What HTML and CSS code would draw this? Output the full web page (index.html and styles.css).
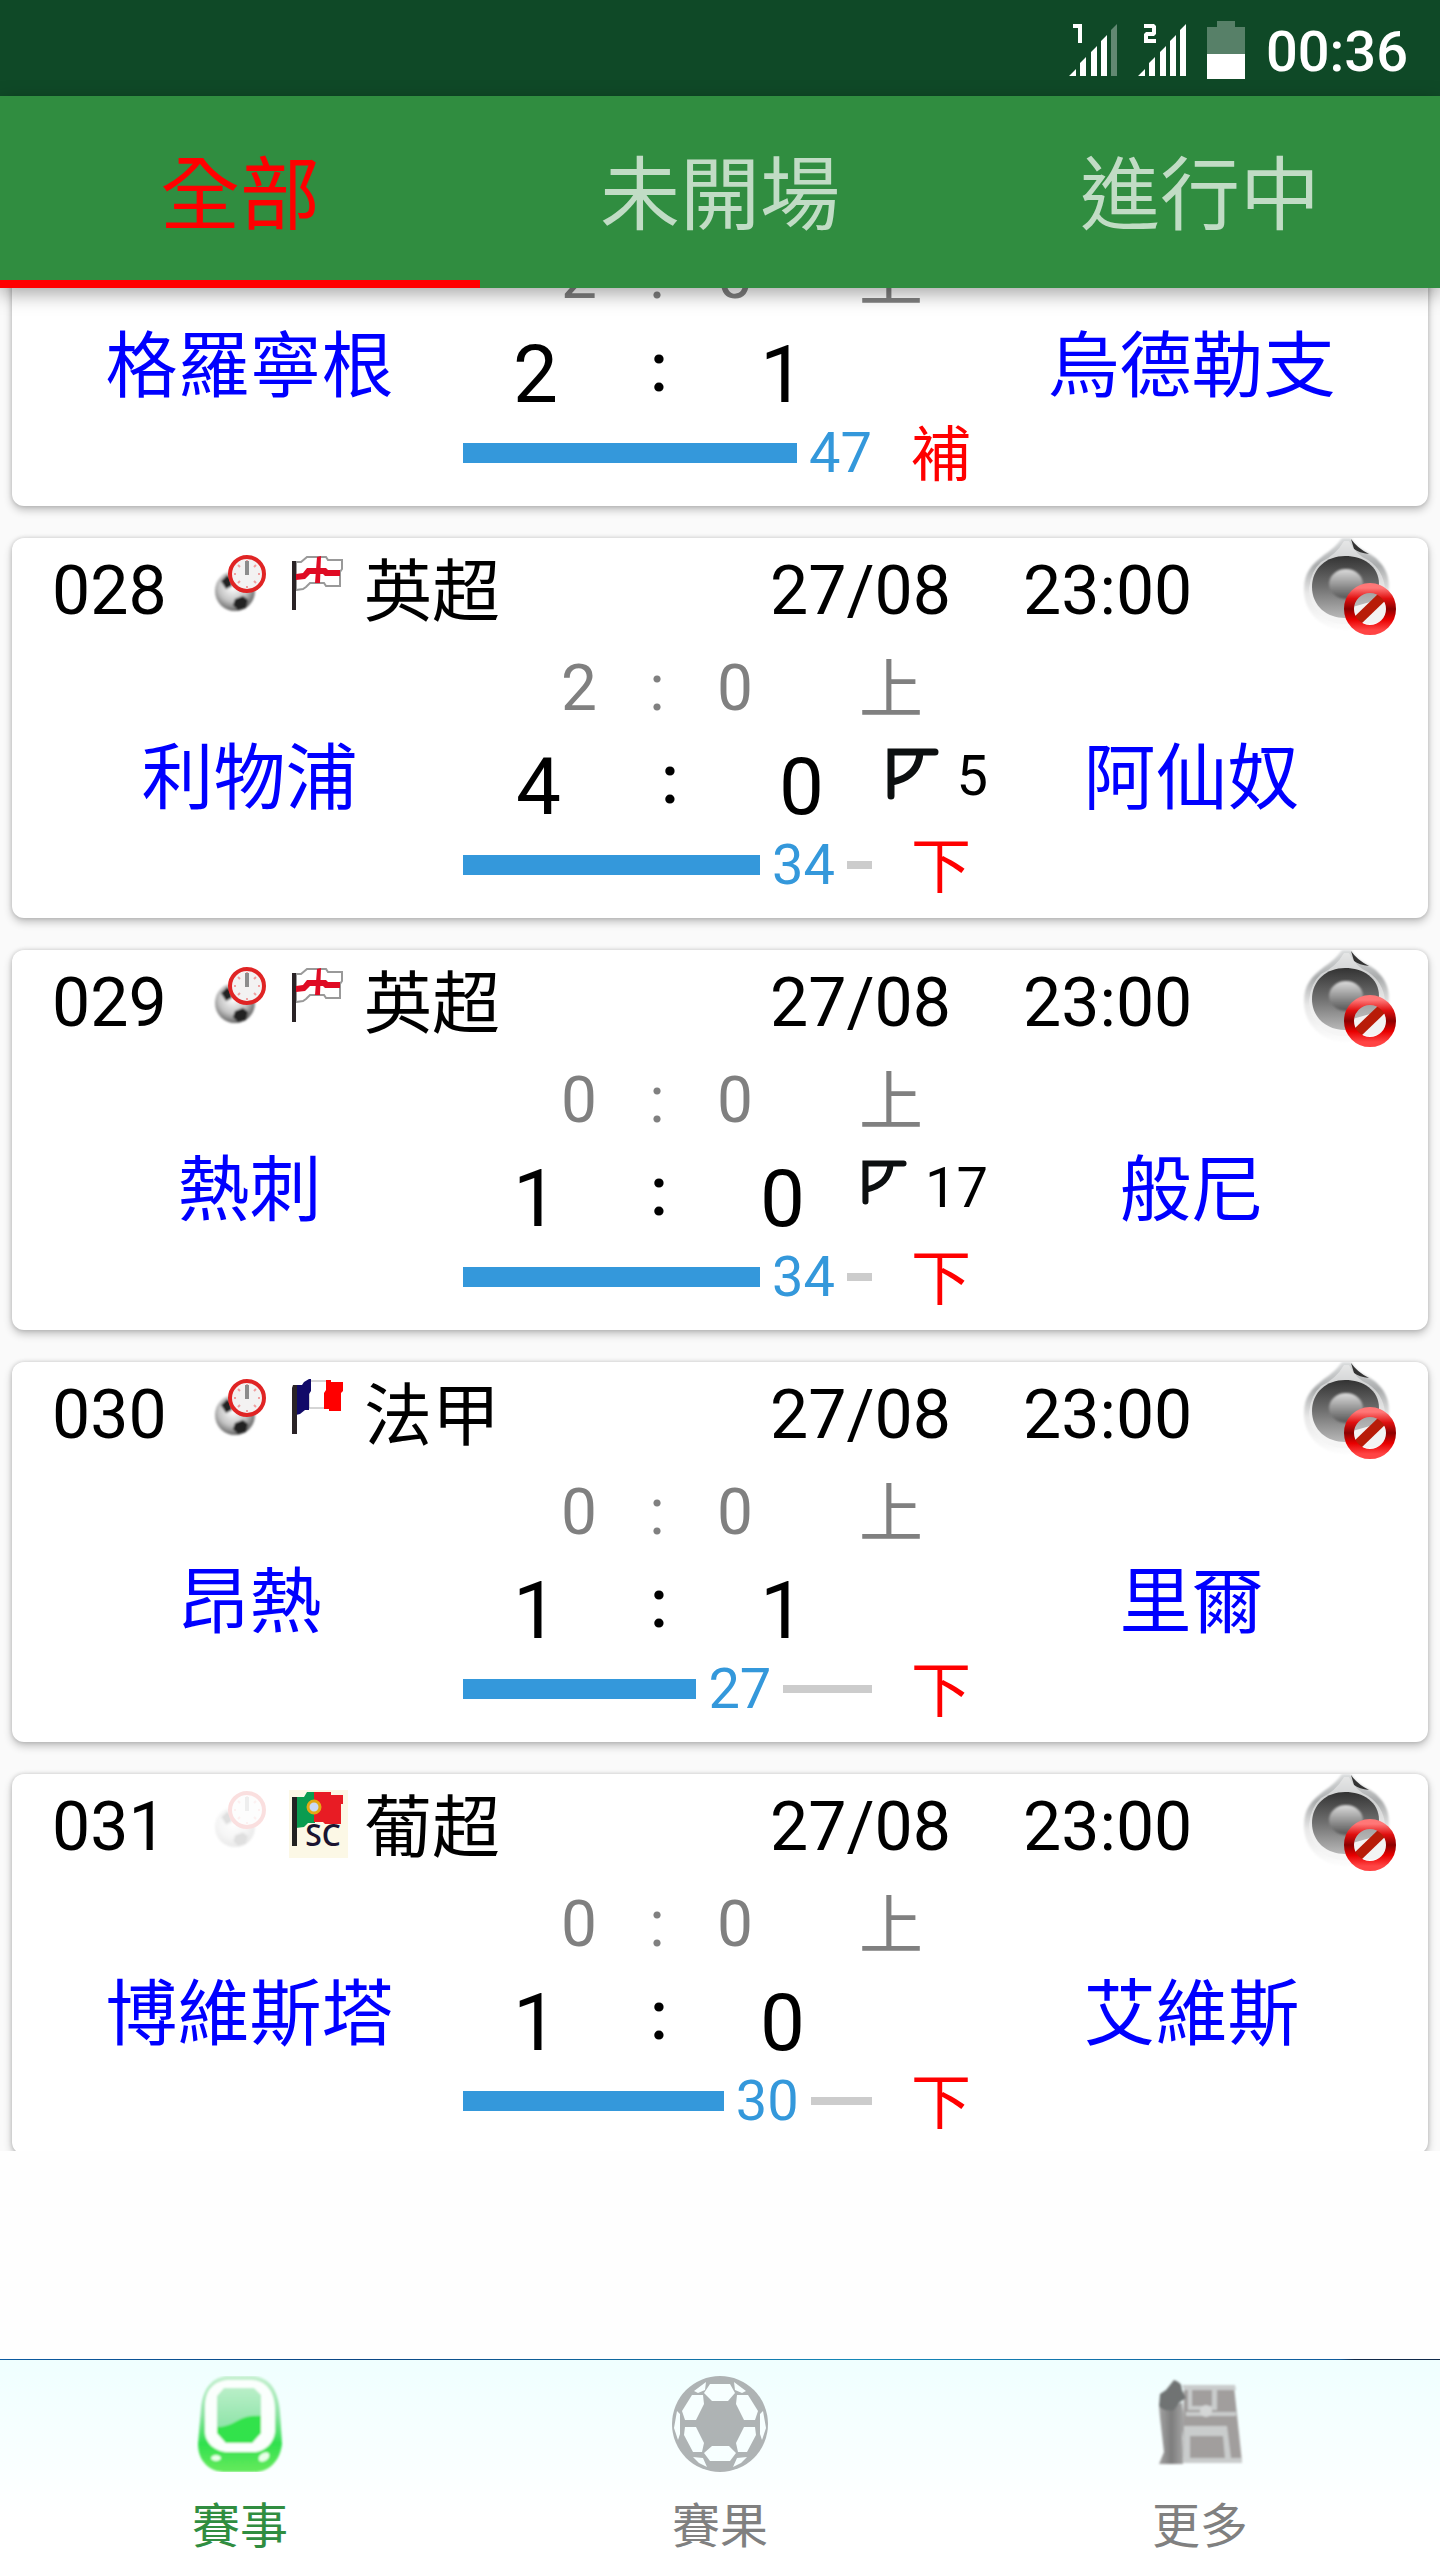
FILE: index.html
```html
<!DOCTYPE html>
<html lang="zh-Hant">
<head>
<meta charset="utf-8">
<meta name="viewport" content="width=device-width, initial-scale=1">
<title>賽事</title>
<link rel="stylesheet" href="styles.css">
</head>
<body>
<svg class="defs" aria-hidden="true">
  <defs>
    <linearGradient id="g-rim" x1="0" y1="0" x2="0" y2="1"><stop offset="0" stop-color="#dcdedf"/><stop offset=".3" stop-color="#a9abac"/><stop offset=".6" stop-color="#e8e8e8"/><stop offset="1" stop-color="#fdfdfd"/></linearGradient>
    <linearGradient id="g-cone" x1="0" y1="0" x2="0" y2="1"><stop offset="0" stop-color="#333"/><stop offset=".5" stop-color="#707070"/><stop offset="1" stop-color="#b8b8b8"/></linearGradient>
    <linearGradient id="g-dome" x1="0" y1="0" x2="0" y2="1"><stop offset="0" stop-color="#dcdcdc"/><stop offset="1" stop-color="#555"/></linearGradient>
    <linearGradient id="g-ban" x1="0" y1="0" x2="0" y2="1"><stop offset="0" stop-color="#f77"/><stop offset=".25" stop-color="#e01010"/><stop offset=".5" stop-color="#8c0000"/><stop offset=".75" stop-color="#e80000"/><stop offset="1" stop-color="#f44"/></linearGradient>
    <radialGradient id="g-ball" cx=".45" cy=".4" r=".6"><stop offset="0" stop-color="#fff"/><stop offset=".6" stop-color="#c4c4c4"/><stop offset="1" stop-color="#666"/></radialGradient>
    <linearGradient id="g-case" x1="0" y1="0" x2="0" y2="1"><stop offset="0" stop-color="#c4f0cf"/><stop offset=".4" stop-color="#8fe4a5"/><stop offset=".7" stop-color="#2fe04e"/><stop offset="1" stop-color="#66ea5c"/></linearGradient>
    <linearGradient id="g-screen" x1="0" y1="0" x2="0" y2="1"><stop offset="0" stop-color="#b9efc8"/><stop offset="1" stop-color="#7fdf9d"/></linearGradient>
    <linearGradient id="g-figure" x1="0" y1="0" x2="1" y2="0"><stop offset="0" stop-color="#a2a2a2"/><stop offset=".5" stop-color="#7d7d7d"/><stop offset="1" stop-color="#a6a6a6"/></linearGradient>
    <filter id="soft"><feGaussianBlur stdDeviation="1"/></filter>
  </defs>
  <symbol id="i-clock" viewBox="0 0 59 68">
    <g filter="url(#soft)">
      <circle cx="23" cy="37" r="20" fill="url(#g-ball)"/>
      <path d="M9 27l6-6 4 3 1 8-6 3zM23 45l8-3 5 4-2 8-8 2-5-5z" fill="#222"/>
    </g>
    <circle cx="35" cy="20" r="17" fill="#f3f2f2" stroke="#e02424" stroke-width="4"/>
    <path d="M35 6v2M35 32v2M22 20h2M46 20h2M26 11l2 2M44 11l-2 2M26 29l2-2M44 29l-2-2" stroke="#efa0a0" stroke-width="2"/>
    <path d="M35 7v14" stroke="#8c8c8c" stroke-width="4"/>
  </symbol>
  <symbol id="i-flag-en" viewBox="0 0 59 68">
    <path d="M7 8h5l6-5h19l2 3h14v9l-2 3v14h-14l-2-3h-14l-4 4-3 2-7 1z" fill="#fff" stroke="#999" stroke-width="2"/>
    <path d="M28 3l4-1-1 27h-5zM7 20l7-1 4-5h19l2 2h12v6h-15l-2-2h-13l-5 5-9 1z" fill="#df0b24"/>
    <path d="M3 7h4v49h-4z" fill="#2a2326"/>
  </symbol>
  <symbol id="i-flag-fr" viewBox="0 0 59 68">
    <path d="M20 3h18v27h-18z" fill="#fff" stroke="#aaa" stroke-width="1"/>
    <path d="M7 7h6l2-3 5-3h2v12l-2 3v16h-4l-5 4-4 1z" fill="#110a68"/>
    <path d="M37 2h5v2h12v9l-2 2v18h-12v-2h-5v-16l2-3z" fill="#f00"/>
    <path d="M4 7h4v49h-5v-46z" fill="#2a2326"/>
  </symbol>
  <symbol id="i-mute" viewBox="0 0 100 100">
    <path d="M43 0q-6 9-18 17C12 27 5 35 5 52c0 24 20 40 41 40s44-15 44-44C90 32 80 20 67 14Q57 9 52 0z" fill="url(#g-rim)" filter="url(#soft)"/>
    <path d="M52 1q6 9 18 15-10-1-15-5z" fill="#333"/>
    <path d="M45 3Q37 17 22 24 12 33 10 50c0 22 17 36 36 36s40-12 40-36Q84 32 69 22 57 17 50 3z" fill="#f3f3f3" opacity=".5"/>
    <path d="M13 49C13 30 28 18 46 18s34 10 34 28c0 22-16 34-34 34S13 68 13 49z" fill="url(#g-cone)"/>
    <ellipse cx="47" cy="46" rx="17" ry="15" fill="url(#g-dome)" filter="url(#soft)"/>
    <path d="M50 70a21 21 0 0 0 42-12z" fill="#eee"/>
    <circle cx="71" cy="71" r="19" fill="#fff" opacity=".3"/>
    <path d="M57 84l27-26" stroke="#b81c08" stroke-width="10"/>
    <circle cx="71" cy="71" r="21" fill="none" stroke="url(#g-ban)" stroke-width="10"/>
  </symbol>
  <symbol id="i-corner" viewBox="0 0 52 52">
    <path d="M4 48V4h44M33 5Q31 29 5 34" fill="none" stroke="#0c0f10" stroke-width="7" stroke-linecap="round"/>
  </symbol>
</svg>

<div class="app">
  <header class="status">
    <svg class="signal" viewBox="0 0 48 52" role="img" aria-label="SIM 1"><path fill="#fff" d="M4 0h9v19h-4V4H4zM0 52l7-7v7zM11 52V39l6-6v19zM22 52V28l6-6v30zM32 52V17l6-6v41z"/><path fill="#fff" opacity=".35" d="M42 52V6l6-6v52z"/></svg>
    <svg class="signal" viewBox="0 0 48 52" role="img" aria-label="SIM 2"><path fill="#fff" d="M6 0h10l2 2v8l-2 2h-6v3h8v4H6v-9l2-2h6V4H6zM0 52l7-7v7zM11 52V39l6-6v19zM22 52V28l6-6v30zM32 52V17l6-6v41zM42 52V6l6-6v52z"/></svg>
    <svg class="battery" viewBox="0 0 38 58" role="img" aria-label="電池"><path fill="#fff" opacity=".3" d="M0 6h10V0h18v6h10v27H0z"/><path fill="#fff" d="M0 33h38v25H0z"/></svg>
    <time class="now">00:36</time>
  </header>

  <nav class="tabs">
    <button class="tab tab-on" type="button">全部</button>
    <button class="tab" type="button">未開場</button>
    <button class="tab" type="button">進行中</button>
  </nav>

  <main class="list">
    <div class="feed">
      <article class="card">
        <div class="body">
          <span class="team">格羅寧根</span>
          <div class="mid">
            <div class="half"><span>2</span><span>:</span><span>0</span><span class="half-tag">上</span></div>
            <div class="score"><div class="goals"><span class="goal">2</span><span class="colon">:</span><span class="goal">1</span></div></div>
            <div class="clock"><div class="progress"><span class="done" style="--minute:47"></span><span class="minute">47</span></div><span class="period">補</span></div>
          </div>
          <span class="team team-away">烏德勒支</span>
        </div>
      </article>

      <article class="card">
        <div class="head">
          <span class="no">028</span>
          <svg class="icon"><use href="#i-clock"/></svg>
          <svg class="icon"><use href="#i-flag-en"/></svg>
          <span class="league">英超</span>
          <span>27/08</span>
          <span>23:00</span>
          <button class="mute" type="button" aria-label="靜音"><svg><use href="#i-mute"/></svg></button>
        </div>
        <div class="body">
          <span class="team">利物浦</span>
          <div class="mid">
            <div class="half"><span>2</span><span>:</span><span>0</span><span class="half-tag">上</span></div>
            <div class="score"><div class="goals goals-wide"><span class="goal">4</span><span class="colon">:</span><span class="goal">0</span></div><div class="corners"><svg class="corner-big"><use href="#i-corner"/></svg><span>5</span></div></div>
            <div class="clock"><div class="progress"><span class="done" style="--minute:34"></span><span class="minute">34</span><span class="rest"></span></div><span class="period">下</span></div>
          </div>
          <span class="team team-away">阿仙奴</span>
        </div>
      </article>

      <article class="card">
        <div class="head">
          <span class="no">029</span>
          <svg class="icon"><use href="#i-clock"/></svg>
          <svg class="icon"><use href="#i-flag-en"/></svg>
          <span class="league">英超</span>
          <span>27/08</span>
          <span>23:00</span>
          <button class="mute" type="button" aria-label="靜音"><svg><use href="#i-mute"/></svg></button>
        </div>
        <div class="body">
          <span class="team">熱刺</span>
          <div class="mid">
            <div class="half"><span>0</span><span>:</span><span>0</span><span class="half-tag">上</span></div>
            <div class="score"><div class="goals"><span class="goal">1</span><span class="colon">:</span><span class="goal">0</span></div><div class="corners"><svg class="corner"><use href="#i-corner"/></svg><span>17</span></div></div>
            <div class="clock"><div class="progress"><span class="done" style="--minute:34"></span><span class="minute">34</span><span class="rest"></span></div><span class="period">下</span></div>
          </div>
          <span class="team team-away">般尼</span>
        </div>
      </article>

      <article class="card">
        <div class="head">
          <span class="no">030</span>
          <svg class="icon"><use href="#i-clock"/></svg>
          <svg class="icon"><use href="#i-flag-fr"/></svg>
          <span class="league">法甲</span>
          <span>27/08</span>
          <span>23:00</span>
          <button class="mute" type="button" aria-label="靜音"><svg><use href="#i-mute"/></svg></button>
        </div>
        <div class="body">
          <span class="team">昂熱</span>
          <div class="mid">
            <div class="half"><span>0</span><span>:</span><span>0</span><span class="half-tag">上</span></div>
            <div class="score"><div class="goals"><span class="goal">1</span><span class="colon">:</span><span class="goal">1</span></div></div>
            <div class="clock"><div class="progress"><span class="done" style="--minute:27"></span><span class="minute">27</span><span class="rest"></span></div><span class="period">下</span></div>
          </div>
          <span class="team team-away">里爾</span>
        </div>
      </article>

      <article class="card">
        <div class="head">
          <span class="no">031</span>
          <svg class="icon icon-off"><use href="#i-clock"/></svg>
          <svg class="icon" viewBox="0 0 59 68">
            <path d="M0 0h59v68h-59z" fill="#fcf8e6"/>
            <path d="M7 7h8l3-5h8v31h-7l-4 4-8 1z" fill="#0a9c50"/>
            <path d="M25 2h17v3h12v9h-2v20h-16l-2-2h-9z" fill="#e81c24"/>
            <circle cx="25" cy="17" r="6" fill="#c9daf5" stroke="#e3a915" stroke-width="3"/>
            <path d="M3 7h5v49h-5z" fill="#222"/>
            <text x="34" y="56" text-anchor="middle" class="flag-code">SC</text>
          </svg>
          <span class="league">葡超</span>
          <span>27/08</span>
          <span>23:00</span>
          <button class="mute" type="button" aria-label="靜音"><svg><use href="#i-mute"/></svg></button>
        </div>
        <div class="body">
          <span class="team">博維斯塔</span>
          <div class="mid">
            <div class="half"><span>0</span><span>:</span><span>0</span><span class="half-tag">上</span></div>
            <div class="score"><div class="goals"><span class="goal">1</span><span class="colon">:</span><span class="goal">0</span></div></div>
            <div class="clock"><div class="progress"><span class="done" style="--minute:30"></span><span class="minute">30</span><span class="rest"></span></div><span class="period">下</span></div>
          </div>
          <span class="team team-away">艾維斯</span>
        </div>
      </article>
    </div>
  </main>

  <nav class="bottom">
    <a class="item item-on" href="#matches">
      <svg class="item-icon" viewBox="0 0 96 96">
        <g filter="url(#soft)">
          <path d="M34 0h28C78 2 86 14 88 36l2 32C88 86 76 96 62 96H34C18 96 6 86 6 68L9 32C11 12 20 2 34 0z" fill="url(#g-case)"/>
          <path d="M36 4h24C76 5 83 18 83 34v22C82 66 74 75 64 76H34C22 75 13 66 13 56V30C13 14 22 5 36 4z" fill="#fbfffd"/>
          <path d="M32 12h30l7 7v38l-9 10H34l-9-10V20z" fill="url(#g-screen)"/>
          <path d="M25 51q10 0 20-6t24-5v17l-9 10H34l-9-10z" fill="#33e24b"/>
          <ellipse cx="24" cy="82" rx="5" ry="3" fill="#e9ffe9"/><ellipse cx="72" cy="81" rx="6" ry="4" transform="rotate(-35 72 81)" fill="#e9ffe9"/>
        </g>
      </svg>
      <span>賽事</span>
    </a>
    <a class="item" href="#results">
      <svg class="item-icon" viewBox="0 0 96 96">
        <circle cx="48" cy="48" r="48" fill="#aeb3b4"/>
        <path fill="#f7ffff" d="M38 8h20l5 9-7 8H40l-8-8zM32 77l8-7h17l7 7-6 8H38zM20 19h11l1 9-8 16H13l-3-9zM76 19H65l-1 9 8 16h11l3-9zM13 51h11l8 16-2 9h-9l-9-17zM83 51H72l-8 16 2 9h9l9-17zM22 15l12-9-1 8-7 3zM74 15L62 6l1 8 7 3zM21 81l10 1 4 9-8-4zM75 81l-10 1-4 9 8-4zM5 35l3 3v20l-2 6-4-12zM91 35l-3 3v20l2 6 4-12z"/>
      </svg>
      <span>賽果</span>
    </a>
    <a class="item" href="#more">
      <svg class="item-icon" viewBox="0 0 96 96">
        <g filter="url(#soft)">
          <path d="M32 10h50l8 76H30z" fill="#a19e9d"/>
          <path d="M30 9h53l1 5H32zM34 36h50v4H34zM36 14h4v16h20V14h5v20H36zM32 50h43l4 32h-6l-2-22H38v23h-7z" fill="#c9cccc"/>
          <circle cx="54" cy="35" r="6" fill="#d4d6d6"/>
          <path d="M30 82h60v5H30z" fill="#c9cccc"/>
          <path d="M7 30l13 2 10-6 2 20-2 16 1 26H7l5-12-4-34z" fill="url(#g-figure)"/>
          <path d="M22 4q8 2 8 10l4 8-6 4-6 8q-10 2-15-4l1-12 6-4z" fill="#6f7373"/>
        </g>
      </svg>
      <span>更多</span>
    </a>
  </nav>
</div>
</body>
</html>
```
FILE: styles.css
```css
* { box-sizing: border-box; }

body {
  margin: 0;
  background: #fefefe;
  color: #000;
  font-family: Roboto, "Noto Sans CJK TC", sans-serif;
}

button {
  margin: 0;
  padding: 0;
  border: 0;
  background: none;
  font: inherit;
  color: inherit;
}

.defs {
  position: absolute;
  width: 0;
  height: 0;
}

.flag-code { font: 600 30px "Open Sans", sans-serif; fill: #1a1430; }

.app {
  display: flex;
  flex-direction: column;
  height: 100vh;
}

/* status bar */
.status {
  display: flex;
  flex: none;
  justify-content: flex-end;
  align-items: center;
  gap: 21px;
  height: 96px;
  padding: 4px 32px 0 0;
  background: #0f4927;
  color: #fff;
}
.signal { width: 48px; height: 52px; }
.battery { width: 38px; height: 58px; }
.now { font-size: 56px; font-weight: 500; line-height: 64px; padding-top: 4px; }

/* tabs */
.tabs {
  display: flex;
  flex: none;
  height: 192px;
  background: #308d40;
  box-shadow: 0 6px 18px rgba(0, 0, 0, .35);
  z-index: 1;
}
.tab {
  flex: 1;
  padding-top: 8px;
  border-top: 8px solid transparent;
  border-bottom: 8px solid transparent;
  font-size: 80px;
  line-height: 96px;
  color: #c1dcc5;
}
.tab-on { color: #f00; border-bottom-color: #f00; }

/* match list */
.list {
  flex: 1;
  min-height: 0;
  margin-bottom: 208px;
  overflow: hidden;
  background: #fafafa;
}
.feed {
  display: flex;
  flex-direction: column;
  gap: 32px;
  margin-top: -62px;
  padding: 0 12px;
}
.card {
  border-radius: 12px;
  background: #fff;
  box-shadow: 0 4px 8px rgba(0, 0, 0, .24), 0 0 4px rgba(0, 0, 0, .16);
}

.head {
  display: grid;
  grid-template-columns: 160px 77px 75px 1fr 253px 276px 100px;
  height: 100px;
  padding: 0 29px 0 40px;
  font-size: 68px;
  line-height: 106px;
}
.league { line-height: 110px; }
.icon { width: 59px; height: 68px; margin-top: 16px; }
.icon-off { opacity: .14; }
.mute { height: 100px; line-height: 0; }
.mute svg { width: 100px; height: 100px; }

.body {
  display: grid;
  grid-template-columns: 1fr 525px 1fr;
  align-items: center;
  padding: 14px 13px 23px 24px;
}
.team {
  padding-top: 10px;
  font-size: 72px;
  line-height: 80px;
  text-align: center;
  color: #00f;
}
.team-away { padding-right: 20px; }

.half {
  display: grid;
  grid-template-columns: 78px 78px 78px 1fr;
  height: 74px;
  padding-left: 77px;
  font-size: 64px;
  line-height: 74px;
  text-align: center;
  color: #808080;
}
.half-tag { padding-left: 85px; line-height: 78px; text-align: left; }

.score {
  display: flex;
  justify-content: space-between;
  height: 94px;
  margin-top: 14px;
  padding-left: 50px;
}
.goals {
  display: flex;
  justify-content: space-between;
  width: 292px;
}
.goals-wide { width: 311px; padding-left: 3px; }
.goal { font-size: 80px; line-height: 94px; }
.colon { font-size: 68px; font-weight: 500; line-height: 80px; }
.corners {
  display: flex;
  gap: 18px;
  padding-top: 8px;
  font-size: 56px;
  line-height: 56px;
}
.corner { width: 45px; height: 45px; }
.corner-big { width: 52px; height: 52px; }

.clock {
  display: flex;
  align-items: center;
  height: 60px;
  margin-top: 1px;
}
.progress {
  display: flex;
  align-items: center;
  width: 409px;
}
.done {
  width: calc(100% * var(--minute) / 45 - 12px);
  height: 20px;
  background: #3498db;
}
.minute {
  margin-left: 12px;
  font-size: 56px;
  line-height: 60px;
  color: #3498db;
}
.rest {
  flex: 1;
  height: 8px;
  margin-left: 12px;
  background: #ccc;
}
.period {
  padding: 6px 0 0 39px;
  font-size: 60px;
  line-height: 60px;
  color: #f00;
}

/* bottom navigation */
.bottom {
  display: flex;
  flex: none;
  height: 201px;
  border-top: 1px solid;
  border-image: linear-gradient(90deg, #0b5aa0, #0a4584 25%, #1488b8 60%, #0f5a9c 93%, #10294a 94%) 1;
  background: linear-gradient(#efffff, #fff 80%);
}
.item {
  display: flex;
  flex: 1;
  flex-direction: column;
  align-items: center;
  gap: 27px;
  padding-top: 16px;
  font-size: 48px;
  line-height: 56px;
  color: #808080;
  text-decoration: none;
}
.item-on { color: #308d40; }
.item-icon { width: 96px; height: 96px; }
```
